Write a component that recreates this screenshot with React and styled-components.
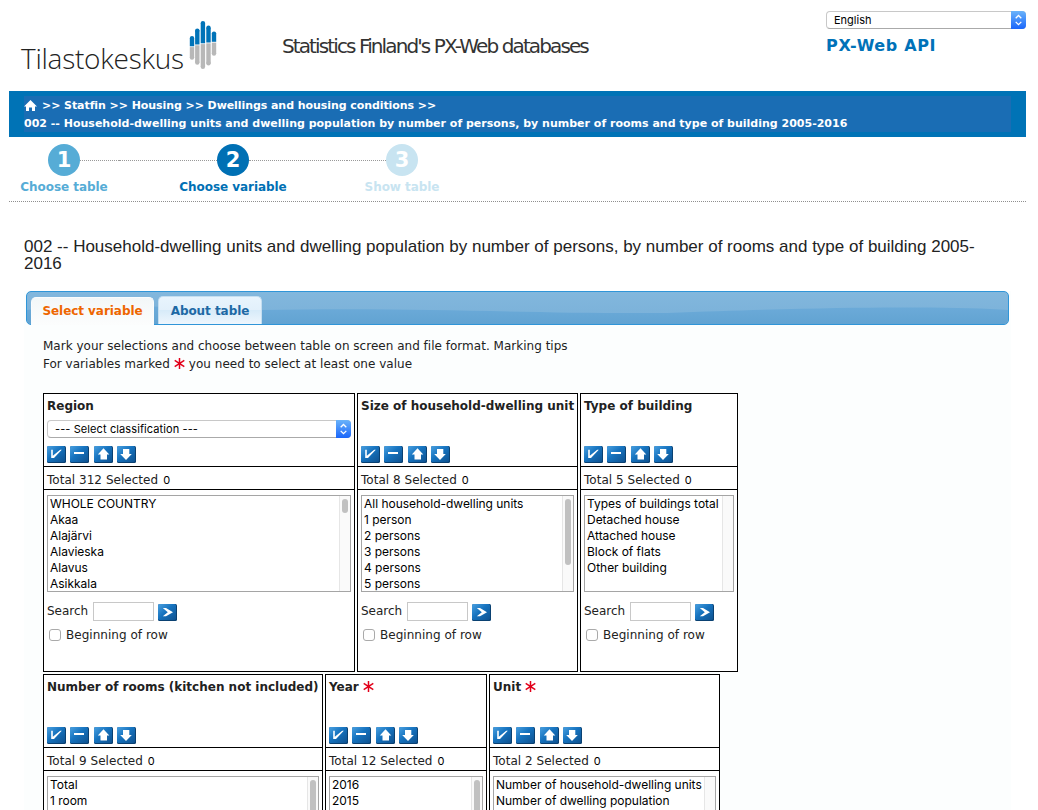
import React from "react";
import styled, { createGlobalStyle, css } from "styled-components";

const Global = createGlobalStyle`
  * { box-sizing: border-box; }
  html, body { margin: 0; padding: 0; background: #fff; }
  body { overflow: hidden; }
`;

const verdana = css`font-family: Verdana, "DejaVu Sans", sans-serif;`;

const Page = styled.div`
  ${verdana}
  width: 1038px;
  height: 810px;
  overflow: hidden;
  padding: 0 12px 0 9px;
  font-size: 12px;
  color: #222;
  white-space: nowrap;
`;

const Header = styled.header`
  display: flex;
  height: 91px;
  padding-left: 12px;
`;
const Brand = styled.div`
  display: flex;
  width: 261px;
`;
const Wordmark = styled.div`
  width: 168px;
  padding-top: 38px;
  font: 300 28px/40px "Open Sans", sans-serif;
  letter-spacing: -0.25px;
  color: #222;
`;
const LogoMark = styled.svg`
  width: 28px;
  height: 50px;
  margin-top: 20px;
`;
const SiteTitle = styled.h1`
  flex: 1;
  margin: 0;
  padding-top: 33px;
  font-size: 20px;
  font-weight: 400;
  line-height: 26px;
  letter-spacing: -1.89px;
  color: #333;
`;
const Tools = styled.div`
  width: 200px;
  padding-top: 11px;
`;
const ApiLink = styled.a`
  display: block;
  margin-top: 7px;
  font-size: 16px;
  font-weight: 700;
  line-height: 20px;
  letter-spacing: 0.65px;
  color: #0072b8;
`;

const SelectBox = styled.div`
  display: flex;
  justify-content: space-between;
  width: ${(p) => p.$w}px;
  height: 18px;
  border: 1px solid #c8c8c8;
  border-bottom-color: #aaa;
  border-radius: 4px;
  background: #fff;
  font: 11px/16px Inter, sans-serif;
  letter-spacing: ${(p) => p.$ls || 0}px;
  color: #000;
  padding-left: 7px;
`;
const Stepper = styled.svg`
  width: 15px;
  height: 18px;
  margin: -1px -1px 0 0;
  flex: none;
`;

const Crumbs = styled.nav`
  height: 46px;
  padding: 5px 15px;
  background: #0073b6;
`;
const CrumbsInner = styled.div`
  height: 36px;
  background: #1a6db4;
  color: #fff;
  font-size: 11px;
  font-weight: 700;
  line-height: 18px;
`;
const CrumbLine = styled.div`
  display: flex;
  align-items: center;
  height: 18px;
  padding-top: 1px;
  letter-spacing: ${(p) => p.$ls || 0}px;
  svg { margin: 0 5px 0 0; }
`;

const Steps = styled.ol`
  display: flex;
  height: 65px;
  margin: 0;
  padding: 7px 0 0 0;
  list-style: none;
  border-bottom: 1px dotted #8f8f8f;
`;
const Step = styled.li`
  width: ${(p) => p.$w}px;
  flex: none;
  display: flex;
  flex-direction: column;
  align-items: center;
  color: ${(p) => p.$c};
  font-size: 12px;
  font-weight: 700;
  line-height: 20px;
  letter-spacing: -0.05px;
`;
const StepTop = styled.div`
  display: grid;
  grid-template-columns: 1fr 32px 1fr;
  width: 100%;
  height: 32px;
  margin-bottom: 1px;
`;
const Rail = styled.span`
  height: 17px;
  border-bottom: ${(p) => (p.$on ? "1px dotted #999" : "0")};
`;
const Bubble = styled.span`
  height: 32px;
  border-radius: 50%;
  background: ${(p) => p.$c};
  color: #fff;
  font-size: 21px;
  line-height: 32px;
  text-align: center;
`;

const TableTitle = styled.h2`
  margin: 36px 0 0 15px;
  font: 400 17px/17px "Liberation Sans", Arial, sans-serif;
  color: #222;
`;

const Panel = styled.main`
  width: 987px;
  margin: 19px 0 0 15px;
  background: #fcfefe;
  height: 600px;
`;
const TabBar = styled.div`
  position: relative;
  display: flex;
  align-items: flex-end;
  width: 983px;
  height: 34px;
  margin-left: 2px;
  padding-left: 4px;
  border: 1px solid #2f95d8;
  border-radius: 5px;
  background: linear-gradient(#82b7dd, #7db3da 55%, #79b2db);
`;
const Wave = styled.svg`
  position: absolute;
  left: 0;
  top: 0;
  width: 981px;
  height: 32px;
  border-radius: 4px;
`;
const Tab = styled.div`
  position: relative;
  width: ${(p) => p.$w}px;
  height: 28px;
  margin-right: ${(p) => (p.$on ? 4 : 0)}px;
  margin-bottom: ${(p) => (p.$on ? -1 : 0)}px;
  border-radius: 5px 5px 0 0;
  border: 1px solid ${(p) => (p.$on ? "#fafcfd" : "#c5def0")};
  border-bottom: 0;
  background: ${(p) =>
    p.$on
      ? "linear-gradient(#f3f7f8, #fcfdfd)"
      : "linear-gradient(#e8f4fd 0, #e2f0fb 50%, #d7ebf9 50%, #eef6fd 100%)"};
  color: ${(p) => (p.$on ? "#ee6600" : "#1d69a5")};
  font-size: 12px;
  font-weight: 700;
  line-height: ${(p) => (p.$on ? 26 : 28)}px;
  letter-spacing: -0.05px;
  text-align: center;
`;
const Intro = styled.p`
  margin: 0;
  padding: 12px 0 0 19px;
  height: 68px;
  font-size: 12px;
  line-height: 18px;
  letter-spacing: 0.015px;
`;
const Star = styled.svg`
  width: 11px;
  height: 11px;
  vertical-align: -1px;
  margin: 0 ${(p) => (p.$tight ? 0 : 4)}px 0 4px;
`;

const VarRow = styled.div`
  display: flex;
  gap: 2px;
  margin: 0 0 2px 19px;
`;
const Card = styled.section`
  width: ${(p) => p.$w}px;
  height: 279px;
  border: 1px solid #000;
  background: #fff;
`;
const CardHead = styled.div`
  height: 73px;
  padding: 3px 3px 0;
  border-bottom: 1px solid #000;
`;
const CardTitle = styled.div`
  height: 23px;
  font-size: 12px;
  font-weight: 700;
  line-height: 18px;
`;
const SelectSlot = styled.div`
  height: 26px;
`;
const Buttons = styled.div`
  display: flex;
  gap: 4px;
  svg:nth-child(3) { margin-left: 1px; }
`;
const Counts = styled.div`
  height: 23px;
  padding: 4px 3px 0;
  border-bottom: 1px solid #000;
  font-size: 12px;
  line-height: 18px;
  letter-spacing: 0.03px;
  span { margin-left: 5px; font: 11px/18px Inter, sans-serif; color: #000; }
`;
const List = styled.ul`
  position: relative;
  margin: 5px 3px 0;
  padding: 0 0 0 2px;
  height: 97px;
  overflow: hidden;
  list-style: none;
  border: 1px solid #a5a5a5;
  color: #000;
  font: 12px/16px Inter, sans-serif;
  letter-spacing: -0.02px;
`;
const Track = styled.span`
  position: absolute;
  right: 0;
  top: 0;
  width: 11px;
  height: 100%;
  border-left: 1px solid #e6e6e6;
  background: #fafafa;
  &::after {
    content: "";
    display: ${(p) => (p.$thumb ? "block" : "none")};
    width: 6px;
    height: ${(p) => p.$thumb}px;
    margin: 3px 0 0 2px;
    border-radius: 3px;
    background: #c1c1c1;
  }
`;
const SearchRow = styled.div`
  display: flex;
  align-items: center;
  height: 20px;
  margin: 9px 0 0 3px;
  svg { margin: 2px 0 0 4px; }
`;
const SearchInput = styled.input`
  width: 61px;
  height: 19px;
  margin-left: auto;
  padding: 0;
  border: 1px solid #c8c8c8;
  background: #fff;
`;
const SearchMain = styled.label`
  display: flex;
  align-items: center;
  width: 107px;
  line-height: 19px;
`;
const CheckRow = styled.label`
  display: flex;
  align-items: center;
  height: 20px;
  margin: 4px 0 0 5px;
  letter-spacing: 0.03px;
`;
const Check = styled.input`
  appearance: none;
  width: 12px;
  height: 12px;
  margin: 0 5px 0 0;
  border: 1px solid #aaa;
  border-radius: 3px;
  background: #fff;
`;

function Select({ w, ls, children }) {
  return (
    <SelectBox $w={w} $ls={ls}>
      {children}
      <Stepper viewBox="0 0 15 18">
        <defs>
          <linearGradient id="aqua" x2="0" y2="1">
            <stop stopColor="#6ab3fa" />
            <stop offset="1" stopColor="#1a66fb" />
          </linearGradient>
        </defs>
        <path d="M0 0h11a4 4 0 0 1 4 4v10a4 4 0 0 1-4 4H0z" fill="url(#aqua)" />
        <path d="M4.7 7.3 7.5 4.5l2.8 2.8M4.7 10.9l2.8 2.8 2.8-2.8" fill="none" stroke="#fff" strokeWidth="1.3" />
      </Stepper>
    </SelectBox>
  );
}

const glyphs = {
  check: <path d="M4.2 3.8h1.600V9.800L13.200 3.800H14.800L7 12H4.200z" fill="#fff" />,
  minus: <path d="M4 7h10" stroke="#fff" strokeWidth="2" />,
  up: <path d="M9.5 2.300 15.300 8.500H13v5H6.500v-5H3.800z" fill="#fff" />,
  down: <path d="M9 14 14.800 8h-2.500V3H6v5H3.200z" fill="#fff" />,
  go: <path d="M4.800 4H8l7 4.200L8 12.300H4.800L9.800 8.200z" fill="#fff" />,
};

function IconButton({ kind }) {
  return (
    <svg width="19" height="17" viewBox="0 0 19 17">
      <defs>
        <linearGradient id="btn" x2="1" y2="1">
          <stop stopColor="#4aa0e0" />
          <stop offset=".45" stopColor="#1673bf" />
          <stop offset="1" stopColor="#0f5290" />
        </linearGradient>
      </defs>
      <rect width="19" height="17" rx="1.5" fill="#0a4172" />
      <rect x="0" y="0" width="18" height="16" rx="1.5" fill="url(#btn)" />
      {glyphs[kind]}
    </svg>
  );
}

function Asterisk({ tight }) {
  return (
    <Star $tight={tight} viewBox="0 0 11 11">
      <path d="M5.5 0v11M.7 2.4l9.6 6.2M10.3 2.4.7 8.6" stroke="#e2001a" strokeWidth="1.5" />
    </Star>
  );
}

function Variable({ w, title, required, select, total, items, thumb }) {
  return (
    <Card $w={w}>
      <CardHead>
        <CardTitle>
          {title}
          {required && <Asterisk tight />}
        </CardTitle>
        <SelectSlot>{select && <Select w={304} ls={0.1}>{select}</Select>}</SelectSlot>
        <Buttons>
          <IconButton kind="check" />
          <IconButton kind="minus" />
          <IconButton kind="up" />
          <IconButton kind="down" />
        </Buttons>
      </CardHead>
      <Counts>
        Total {total} Selected<span>0</span>
      </Counts>
      <List>
        {items.map((t) => (
          <li key={t}>{t}</li>
        ))}
        <Track $thumb={thumb} />
      </List>
      <SearchRow>
        <SearchMain>
          Search
          <SearchInput />
        </SearchMain>
        <IconButton kind="go" />
      </SearchRow>
      <CheckRow>
        <Check type="checkbox" />
        Beginning of row
      </CheckRow>
    </Card>
  );
}

const bars = [
  [2, 16, 26.3, 39.5],
  [7.3, 8.5, 24.5, 44.5],
  [12.9, 1, 23.3, 48.8],
  [18.5, 5.7, 22.5, 45.3],
  [24, 11.5, 21.8, 35.5],
];

export default function App() {
  return (
    <Page>
      <Global />
      <Header>
        <Brand>
          <Wordmark>Tilastokeskus</Wordmark>
          <LogoMark viewBox="0 0 28 50">
            {bars.map(([x, top, mid, end]) => (
              <g key={x} fill="none" strokeWidth="4.4">
                <path d={`M${x + 1} ${top + 2}V${mid}`} stroke="#0073b8" />
                <circle cx={x + 1} cy={top + 2.1} r="2.2" fill="#0073b8" stroke="none" />
                <path d={`M${x + 1} ${mid + 0.8}V${end - 2}`} stroke="#b8b8b8" />
                <circle cx={x + 1} cy={end - 2} r="2.2" fill="#b8b8b8" stroke="none" />
              </g>
            ))}
          </LogoMark>
        </Brand>
        <SiteTitle>Statistics Finland's PX-Web databases</SiteTitle>
        <Tools>
          <Select w={200}>English</Select>
          <ApiLink>PX-Web API</ApiLink>
        </Tools>
      </Header>

      <Crumbs>
        <CrumbsInner>
          <CrumbLine $ls={-0.07}>
            <svg width="13" height="11" viewBox="0 0 13 11">
              <path d="M6.5 0 13 6.5h-2V11H8V7.5H5V11H2V6.500H0z" fill="#fff" />
            </svg>
            &gt;&gt; Statfin &gt;&gt; Housing &gt;&gt; Dwellings and housing conditions &gt;&gt;
          </CrumbLine>
          <CrumbLine>
            002 -- Household-dwelling units and dwelling population by number of persons, by number of rooms and type of building 2005-2016
          </CrumbLine>
        </CrumbsInner>
      </Crumbs>

      <Steps>
        <Step $w={110} $c="#56acd6">
          <StepTop>
            <Rail />
            <Bubble $c="#56acd6">1</Bubble>
            <Rail $on />
          </StepTop>
          Choose table
        </Step>
        <Step $w={228} $c="#0070b4">
          <StepTop>
            <Rail $on />
            <Bubble $c="#0070b4">2</Bubble>
            <Rail $on />
          </StepTop>
          Choose variable
        </Step>
        <Step $w={110} $c="#c8e4f1">
          <StepTop>
            <Rail $on />
            <Bubble $c="#c8e4f1">3</Bubble>
            <Rail />
          </StepTop>
          Show table
        </Step>
      </Steps>

      <TableTitle>
        002 -- Household-dwelling units and dwelling population by number of persons, by number of rooms and type of building 2005-
        <br />
        2016
      </TableTitle>

      <Panel>
        <TabBar>
          <Wave viewBox="0 0 981 32" preserveAspectRatio="none">
            <defs>
              <linearGradient id="wave" x2="0" y2="1">
                <stop stopColor="#6cabd9" />
                <stop offset="1" stopColor="#62a3d2" />
              </linearGradient>
            </defs>
            <path d="M0 18C80 8 150 18 235 18C400 15 500 22 640 21C750 17 830 15 890 15.500C930 15.500 960 16.500 981 18V32H0z" fill="url(#wave)" />
          </Wave>
          <Tab $on $w={123}>Select variable</Tab>
          <Tab $w={104}>About table</Tab>
        </TabBar>
        <Intro>
          Mark your selections and choose between table on screen and file format. Marking tips
          <br />
          For variables marked
          <Asterisk />
          you need to select at least one value
        </Intro>
        <VarRow>
          <Variable w={312} title="Region" select="--- Select classification ---" total={312} thumb={14}
            items={["WHOLE COUNTRY", "Akaa", "Alajärvi", "Alavieska", "Alavus", "Asikkala"]} />
          <Variable w={221} title="Size of household-dwelling unit" total={8} thumb={66}
            items={["All household-dwelling units", "1 person", "2 persons", "3 persons", "4 persons", "5 persons"]} />
          <Variable w={158} title="Type of building" total={5}
            items={["Types of buildings total", "Detached house", "Attached house", "Block of flats", "Other building"]} />
        </VarRow>
        <VarRow>
          <Variable w={280} title="Number of rooms (kitchen not included)" total={9} thumb={60} items={["Total", "1 room"]} />
          <Variable w={162} title="Year" required total={12} thumb={45} items={["2016", "2015"]} />
          <Variable w={231} title="Unit" required total={2} items={["Number of household-dwelling units", "Number of dwelling population"]} />
        </VarRow>
      </Panel>
    </Page>
  );
}
